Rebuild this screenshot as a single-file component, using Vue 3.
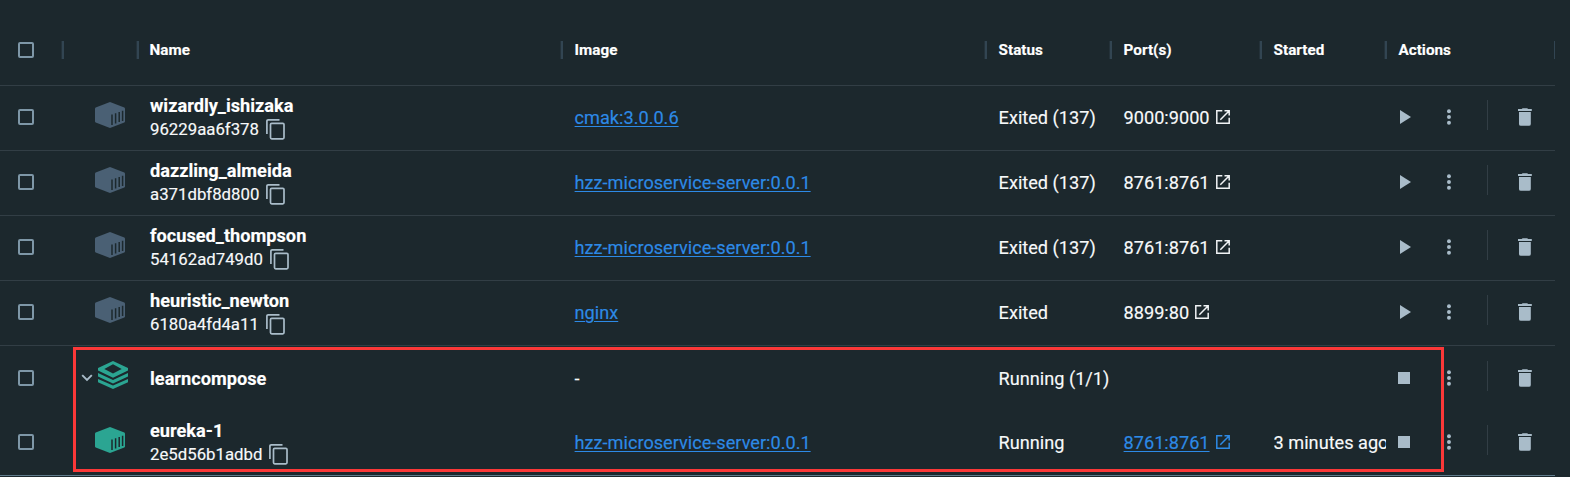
<script setup>
const rows = [
  { name: 'wizardly_ishizaka', id: '96229aa6f378', image: 'cmak:3.0.0.6', status: 'Exited (137)', port: '9000:9000' },
  { name: 'dazzling_almeida', id: 'a371dbf8d800', image: 'hzz-microservice-server:0.0.1', status: 'Exited (137)', port: '8761:8761' },
  { name: 'focused_thompson', id: '54162ad749d0', image: 'hzz-microservice-server:0.0.1', status: 'Exited (137)', port: '8761:8761' },
  { name: 'heuristic_newton', id: '6180a4fd4a11', image: 'nginx', status: 'Exited', port: '8899:80' },
  { name: 'learncompose', group: true, status: 'Running (1/1)', running: true },
  { name: 'eureka-1', id: '2e5d56b1adbd', image: 'hzz-microservice-server:0.0.1', status: 'Running', port: '8761:8761', started: '3 minutes ago', running: true },
]
const headers = ['', '', 'Name', 'Image', 'Status', 'Port(s)', 'Started', 'Actions']
</script>

<template>
  <div class="page">
    <div class="table">
      <div class="row head">
        <div v-for="(h, i) in headers" :key="i" class="cell" :class="'c' + i">
          <span v-if="i === 0" class="box"></span>
          <span v-else>{{ h }}</span>
          <i class="sep"></i>
        </div>
      </div>
      <div v-for="r in rows" :key="r.name" class="row" :class="{ group: r.group, child: r.started, item: !r.group }">
        <div class="cell c0"><span class="box"></span></div>
        <div class="cell c1">
          <svg v-if="r.group" class="chevron" width="12" height="8" viewBox="0 0 12 8"><path d="M1.2 1.2 6 6l4.8-4.8" fill="none" stroke="#a9bcc9" stroke-width="1.9" /></svg>
          <svg v-if="r.group" class="stack" width="30" height="28" viewBox="0 0 30 28" fill="#2ba592">
            <path fill-rule="evenodd" d="M15 0 30 7v2.6L15 16.800 0 9.600V7zM15 3.300 6.300 8 15 12.400 23.700 8z" />
            <path d="M0 12.100 15 19l15-6.900v3.500L15 22.500 0 15.600z" />
            <path d="M0 17.900 15 24.500l15-6.600v3.400L15 28 0 21.300z" />
          </svg>
          <svg v-else class="cube" width="30" height="26" viewBox="0 0 30 26">
            <path d="M15 0 29.300 5.600q.7.300.7 1V19.400q0 .7-.7 1L15 26 .7 20.400q-.7-.3-.7-1V6.600q0-.7.7-1z" :fill="r.running ? '#2ba592' : '#4a6074'" />
            <path d="M17 12.400V23M20.600 11.200V21.500M24.200 9.900V20.100M27.600 8.700V18.900" stroke="#1c282d" stroke-width="1.500" />
          </svg>
        </div>
        <div class="cell c2 name">
          <b>{{ r.name }}</b>
          <span v-if="r.id" class="id">{{ r.id }}
            <svg class="copy" width="19" height="21" viewBox="0 0 19 21" fill="none" stroke="#a9bcc9" stroke-width="1.700"><path d="M.9 15V2.200Q.9.9 2.200.9H13.500" /><rect x="4.500" y="4.400" width="13.500" height="15.400" rx="1.200" /></svg>
          </span>
        </div>
        <div class="cell c3"><a v-if="r.image">{{ r.image }}</a><span v-else>-</span></div>
        <div class="cell c4">{{ r.status }}</div>
        <div class="cell c5">
          <template v-if="r.port">
            <a v-if="r.running">{{ r.port }}</a><span v-else>{{ r.port }}</span>
            <svg class="ext" width="14" height="14" viewBox="0 0 14 14" fill="none" :stroke="r.running ? '#2d8ae6' : '#f0f3f5'" stroke-width="1.500"><path d="M6.300.8H.8v12.400h12.400V7.700M8.500.8h4.700v4.700M13 1 4.300 9.700" /></svg>
          </template>
        </div>
        <div class="cell c6"><span class="clip">{{ r.started }}</span></div>
        <div class="cell c7">
          <span class="state">
            <span v-if="r.running" class="stop"></span>
            <svg v-else class="play" width="11" height="14" viewBox="0 0 11 14"><path d="M0 0 11 7 0 14z" fill="#a9bcc9" /></svg>
          </span>
          <svg class="dots" width="4" height="16" viewBox="0 0 4 16" fill="#a9bcc9"><circle cx="2" cy="2.200" r="2" /><circle cx="2" cy="8" r="2" /><circle cx="2" cy="13.800" r="2" /></svg>
          <i class="rule"></i>
          <svg class="trash" width="14" height="18" viewBox="0 0 14 18" fill="#a9bcc9"><path d="M0 1h3.700l1-1h4.600l1 1H14v2H0zM1 4h12v12q0 2-2 2H3q-2 0-2-2z" /></svg>
        </div>
      </div>
    </div>
    <div class="highlight"></div>
  </div>
</template>

<style>
body { margin: 0; background: #1c282d; }
</style>

<style scoped>
.page { position: relative; width: 1570px; height: 477px; overflow: hidden; background: #1c282d; color: #f7f9fa; -webkit-text-stroke: 0.15px; font-family: Roboto, "Liberation Sans", sans-serif; font-size: 18.150px; }
.table { width: 1555px; }
.row { display: grid; grid-template-columns: 63px 75px 424px 424px 125px 150px 125px 169px; height: 65px; box-sizing: border-box; border-bottom: 1px solid #323e45; }
.head { height: 86px; padding-top: 15px; font-size: 15.250px; font-weight: 700; color: #fff; }
.head .cell { position: relative; }
.sep { position: absolute; right: -1px; top: 26px; width: 2px; height: 18px; background: #324552; box-shadow: -1px 0 #24323a; }
.c7 .sep { right: 0; width: 1px; box-shadow: none; }
.group { border-bottom-color: transparent; }
.child { border-bottom-color: #607b8b; }
.cell { display: flex; align-items: center; min-width: 0; padding-left: 12.600px; white-space: nowrap; }
.item .cell { padding-bottom: 2px; }
.head .cell.name, .head .c2 { padding-left: 11.600px; }
.cell.c0 { padding-left: 18px; }
.box { width: 16px; height: 16px; box-sizing: border-box; border: 2px solid #7e97a7; border-radius: 2px; }
.item .cell.c0 { padding-bottom: 3px; }
.group .c0 { padding-bottom: 1px; }
.cell.c1 { padding-left: 32px; }
.item .cell.c1 { padding-bottom: 6px; }
.group .cell.c1 { padding-left: 18px; gap: 5px; padding-bottom: 6px; }
.chevron { margin-top: 6px; }
.cell.name { flex-direction: column; align-items: flex-start; justify-content: center; padding-left: 12px; }
.item .cell.name { padding-bottom: 1px; }
.group .cell.name { padding-top: 1px; }
.name b { line-height: 24px; font-size: 18.200px; color: #fff; }
.id { display: flex; align-items: center; gap: 7px; height: 24px; margin-top: -1px; font-size: 16.800px; }
.copy { margin-top: 1px; }
a { color: #2d8ae6; text-decoration: underline; text-underline-offset: 2px; text-decoration-thickness: 1px; }
.ext { margin-left: 6px; }
.clip { width: 113px; overflow: hidden; }
.cell.c7 { padding-left: 13px; padding-right: 23px; }
.head .cell.c7 { padding-left: 12.500px; }
.state { display: flex; width: 49px; }
.play { margin-left: 1px; }
.stop { width: 12px; height: 12px; margin-left: -1px; background: #a9bcc9; }
.rule { width: 1px; height: 30px; margin: 0 30px 4px 36px; background: #323e45; }
.highlight { position: absolute; left: 73px; top: 347px; width: 1371px; height: 125px; box-sizing: border-box; border: 3px solid #fb3838; }
</style>
